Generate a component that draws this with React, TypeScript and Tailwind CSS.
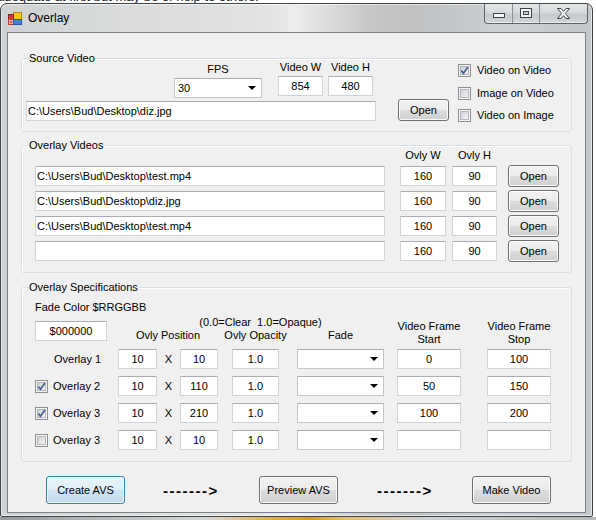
import React from "react";

function TB({ className = "", value = "", left = false }: { className?: string; value?: string; left?: boolean }) {
  return (
    <div
      className={`h-[20px] bg-white border border-[#d0d3d9] border-t-[#abadb3] flex items-center leading-none whitespace-nowrap overflow-hidden ${left ? "justify-start pl-[1px]" : "justify-center"} ${className}`}
    >
      {value}
    </div>
  );
}

function Combo({ className = "", value = "" }: { className?: string; value?: string }) {
  return (
    <div className={`h-[20px] bg-white border border-[#c3c6cc] border-t-[#abadb3] flex items-center justify-between pl-[3px] pr-[5px] leading-none ${className}`}>
      <span>{value}</span>
      <svg width="8" height="4" viewBox="0 0 8 4">
        <path d="M0 0H8L4 4Z" fill="#000" />
      </svg>
    </div>
  );
}

function Btn({ className = "", children, focused = false }: { className?: string; children: React.ReactNode; focused?: boolean }) {
  return (
    <button
      className={
        focused
          ? `rounded-[3px] border border-[#3c7fb1] bg-[linear-gradient(180deg,#e9f3fa_0%,#dfeef8_50%,#cfe5f4_50%,#c3dcee_100%)] shadow-[inset_0_0_0_1px_#f2f9fd] text-[11px] leading-none text-black flex items-center justify-center ${className}`
          : `rounded-[3px] border border-[#707070] bg-[linear-gradient(180deg,#f2f2f2_0%,#ebebeb_50%,#dddddd_50%,#cfcfcf_100%)] shadow-[inset_0_0_0_1px_#fbfbfb] text-[11px] leading-none text-black flex items-center justify-center ${className}`
      }
    >
      {children}
    </button>
  );
}

function Check({ checked = false }: { checked?: boolean }) {
  return (
    <svg width="13" height="13" viewBox="0 0 13 13" className="shrink-0">
      <defs>
        <linearGradient id="cbg" x1="0" y1="0" x2="1" y2="1">
          <stop offset="0" stopColor="#c9cdd3" />
          <stop offset="1" stopColor="#f8f8f8" />
        </linearGradient>
      </defs>
      <rect x="0.5" y="0.5" width="12" height="12" fill="#f4f4f4" stroke="#8e8f8f" />
      <rect x="2.5" y="2.5" width="8" height="8" fill="url(#cbg)" stroke="#b4b8be" />
      {checked && <path d="M3.3 6.4 L5.5 9.3 L9.9 3.1" fill="none" stroke="#4a5d8e" strokeWidth="1.7" />}
    </svg>
  );
}

function Group({ title, className = "", children }: { title: string; className?: string; children: React.ReactNode }) {
  return (
    <div className={`relative border border-[#d5dfe5] rounded-[3px] shadow-[inset_1px_1px_0_#ffffff] ${className}`}>
      <span className="absolute left-[6px] top-[-8px] px-[1px] bg-[#f0f0f0] leading-[14px] whitespace-nowrap">{title}</span>
      {children}
    </div>
  );
}

function AppIcon() {
  return (
    <svg width="14" height="13" viewBox="0 0 14 13">
      <rect x="5.5" y="0.5" width="8" height="7" fill="#f6c51e" stroke="#b98a0a" />
      <rect x="0.5" y="2.5" width="5" height="5" fill="#d8392b" stroke="#8d2018" />
      <rect x="0.5" y="7.5" width="5" height="5" fill="#f0f0f0" stroke="#b8402f" />
      <rect x="1.5" y="8.5" width="3" height="3" fill="#e0584a" />
      <rect x="5.5" y="7.5" width="8" height="5" fill="#3f82d8" stroke="#24579b" />
    </svg>
  );
}

export default function App() {
  return (
    <div className="w-[596px] h-[520px] bg-white overflow-hidden font-['Liberation_Sans',Arial,sans-serif] text-[11px] text-black">
      {/* page behind the window */}
      <div className="h-[3px] overflow-hidden">
        <div className="-mt-[10px] -ml-[3px] text-[13px] leading-[13px] whitespace-nowrap text-[#222]">
          adequate at first but may be of help to others.
        </div>
      </div>

      {/* window */}
      <div className="w-[593px] h-[514px] rounded-t-[7px] rounded-b-[2px] border border-[#3f4447] bg-[linear-gradient(90deg,#cfd2d4_0%,#d9dbdc_20%,#e2e3e3_44%,#ececec_50%,#c6c8c9_62%,#bfc1c3_70%,#cdd0d2_85%,#c5c8ca_100%)] shadow-[inset_0_0_0_1px_rgba(255,255,255,0.55)] flex flex-col">
        {/* title bar */}
        <div className="h-[28px] flex items-start shrink-0">
          <div className="ml-[7px] mt-[8px]">
            <AppIcon />
          </div>
          <div className="ml-[6px] mt-[7px] text-[12px] leading-[14px] text-black">Overlay</div>
          <div className="ml-auto mr-[4px] h-[20px] flex border-x border-b border-[#5e6266] rounded-b-[4px] bg-[linear-gradient(180deg,#e4e6e8_0%,#d6d9dc_45%,#c6cacd_55%,#d2d5d8_100%)] shadow-[inset_0_-1px_0_rgba(255,255,255,0.6)] overflow-hidden">
            <div className="w-[27px] flex justify-center pt-[9px]">
              <svg width="12" height="5" viewBox="0 0 12 5">
                <rect x="0.5" y="0.5" width="11" height="4" fill="#f4f4f4" stroke="#3f4347" />
              </svg>
            </div>
            <div className="w-[27px] border-l border-[#8b9095] flex justify-center pt-[4px]">
              <svg width="12" height="10" viewBox="0 0 12 10">
                <rect x="0.5" y="0.5" width="11" height="9" fill="#f4f4f4" stroke="#3f4347" />
                <rect x="3.5" y="3.5" width="5" height="3" fill="#c4c8cc" stroke="#3f4347" />
              </svg>
            </div>
            <div className="w-[48px] border-l border-[#8b9095] flex justify-center pt-[4px]">
              <svg width="13" height="11" viewBox="0 0 13 11">
                <path d="M0.5 0.5H4L6.5 3.4L9 0.5H12.5L8.4 5.5L12.5 10.5H9L6.5 7.6L4 10.5H0.5L4.6 5.5Z" fill="#f4f4f4" stroke="#3f4347" />
              </svg>
            </div>
          </div>
        </div>

        {/* client area */}
        <div className="mx-[6px] h-[481px] shrink-0 border border-[#7c8389] bg-[#f0f0f0] flex flex-col px-[13px]">
          {/* Source Video */}
          <Group title="Source Video" className="mt-[25px] h-[74px] shrink-0">
            <div className="flex pl-[4px] pt-[1px]">
              <div className="w-[350px] flex flex-col">
                <div className="flex items-start ml-[148px]">
                  <div className="w-[88px] mt-[2px] flex flex-col items-center">
                    <span className="leading-[14px]">FPS</span>
                    <Combo className="mt-[2px] w-[88px]" value="30" />
                  </div>
                  <div className="w-[45px] ml-[16px] flex flex-col items-center">
                    <span className="leading-[14px]">Video W</span>
                    <TB className="mt-[2px] w-[45px]" value="854" />
                  </div>
                  <div className="w-[45px] ml-[5px] flex flex-col items-center">
                    <span className="leading-[14px]">Video H</span>
                    <TB className="mt-[2px] w-[45px]" value="480" />
                  </div>
                </div>
                <TB className="mt-[3px] w-[350px]" value={"C:\\Users\\Bud\\Desktop\\diz.jpg"} left />
              </div>
              <Btn className="ml-[22px] mt-[39px] w-[51px] h-[22px]">Open</Btn>
              <div className="ml-[9px] flex flex-col">
                <div className="mt-[4px] h-[13px] flex items-center gap-[6px] whitespace-nowrap">
                  <Check checked />
                  <span>Video on Video</span>
                </div>
                <div className="mt-[10px] h-[13px] flex items-center gap-[6px] whitespace-nowrap">
                  <Check />
                  <span>Image on Video</span>
                </div>
                <div className="mt-[9px] h-[13px] flex items-center gap-[6px] whitespace-nowrap">
                  <Check />
                  <span>Video on Image</span>
                </div>
              </div>
            </div>
          </Group>

          {/* Overlay Videos */}
          <Group title="Overlay Videos" className="mt-[13px] h-[128px] shrink-0">
            <div className="pl-[13px] pt-[2px] flex flex-col">
              <div className="h-[14px] flex leading-[14px]">
                <div className="w-[365px]" />
                <div className="w-[46px] text-center">Ovly W</div>
                <div className="w-[45px] ml-[6px] text-center">Ovly H</div>
              </div>
              <div className="mt-[4px] flex flex-col gap-[5px]">
                {[
                  "C:\\Users\\Bud\\Desktop\\test.mp4",
                  "C:\\Users\\Bud\\Desktop\\diz.jpg",
                  "C:\\Users\\Bud\\Desktop\\test.mp4",
                  "",
                ].map((p, i) => (
                  <div key={i} className="h-[20px] flex items-center">
                    <TB className="w-[350px]" value={p} left />
                    <TB className="ml-[15px] w-[46px]" value="160" />
                    <TB className="ml-[6px] w-[45px]" value="90" />
                    <Btn className="ml-[11px] w-[51px] h-[22px]">Open</Btn>
                  </div>
                ))}
              </div>
            </div>
          </Group>

          {/* Overlay Specifications */}
          <Group title="Overlay Specifications" className="mt-[14px] h-[175px] shrink-0">
            <div className="pl-[13px] flex flex-col">
              <div className="mt-[13px] flex items-end leading-[13px]">
                <div className="w-[83px] flex flex-col">
                  <span className="whitespace-nowrap">Fade Color $RRGGBB</span>
                  <TB className="mt-[7px] mb-[5px] w-[72px] h-[19px]" value="$000000" />
                </div>
                <div className="w-[100px] flex flex-col items-center">
                  <span className="mb-[4px] whitespace-nowrap">Ovly Position</span>
                </div>
                <div className="ml-[14px] w-[47px] flex flex-col items-center">
                  <span className="ml-[10px] whitespace-pre">{"(0.0=Clear  1.0=Opaque)"}</span>
                  <span className="mb-[4px] whitespace-nowrap">Ovly Opacity</span>
                </div>
                <div className="ml-[18px] w-[87px] flex flex-col items-center">
                  <span className="mb-[4px]">Fade</span>
                </div>
                <div className="ml-[13px] w-[64px] flex flex-col items-center">
                  <span className="whitespace-nowrap">Video Frame</span>
                  <span>Start</span>
                </div>
                <div className="ml-[26px] w-[64px] flex flex-col items-center">
                  <span className="whitespace-nowrap">Video Frame</span>
                  <span>Stop</span>
                </div>
              </div>

              <div className="mt-[3px] flex flex-col gap-[7px]">
                {[
                  { label: "Overlay 1", cb: null as null | boolean, x: "10", y: "10", start: "0", stop: "100" },
                  { label: "Overlay 2", cb: true, x: "10", y: "110", start: "50", stop: "150" },
                  { label: "Overlay 3", cb: true, x: "10", y: "210", start: "100", stop: "200" },
                  { label: "Overlay 3", cb: false, x: "10", y: "10", start: "", stop: "" },
                ].map((r, i) => (
                  <div key={i} className="h-[20px] flex items-center">
                    {r.cb === null ? (
                      <div className="w-[83px] pl-[19px] whitespace-nowrap">{r.label}</div>
                    ) : (
                      <div className="w-[83px] flex items-center whitespace-nowrap">
                        <Check checked={r.cb} />
                        <span className="ml-[5px]">{r.label}</span>
                      </div>
                    )}
                    <div className="w-[100px] flex items-center">
                      <TB className="w-[39px]" value={r.x} />
                      <span className="w-[23px] text-center">X</span>
                      <TB className="w-[38px]" value={r.y} />
                    </div>
                    <TB className="ml-[14px] w-[47px]" value="1.0" />
                    <Combo className="ml-[18px] w-[87px]" />
                    <TB className="ml-[13px] w-[64px]" value={r.start} />
                    <TB className="ml-[26px] w-[64px]" value={r.stop} />
                  </div>
                ))}
              </div>
            </div>
          </Group>

          {/* action buttons */}
          <div className="mt-[14px] h-[28px] flex items-center pl-[25px] shrink-0">
            <Btn focused className="w-[79px] h-[28px]">Create AVS</Btn>
            <span className="ml-[38px] w-[61px] font-bold text-[15px] tracking-[1.5px] whitespace-nowrap leading-none">-------&gt;</span>
            <Btn className="ml-[35px] w-[79px] h-[28px]">Preview AVS</Btn>
            <span className="ml-[39px] w-[61px] font-bold text-[15px] tracking-[1.5px] whitespace-nowrap leading-none">-------&gt;</span>
            <Btn className="ml-[34px] w-[79px] h-[28px]">Make Video</Btn>
          </div>
        </div>
      </div>

      {/* desktop strip below */}
      <div className="h-[3px] w-[596px] bg-[linear-gradient(90deg,#9a9a9a_0%,#b5b5b5_15%,#d8d8d8_35%,#e0b050_45%,#d89a30_52%,#e6c070_58%,#cfcfcf_70%,#b9b9b9_100%)]" />
    </div>
  );
}
